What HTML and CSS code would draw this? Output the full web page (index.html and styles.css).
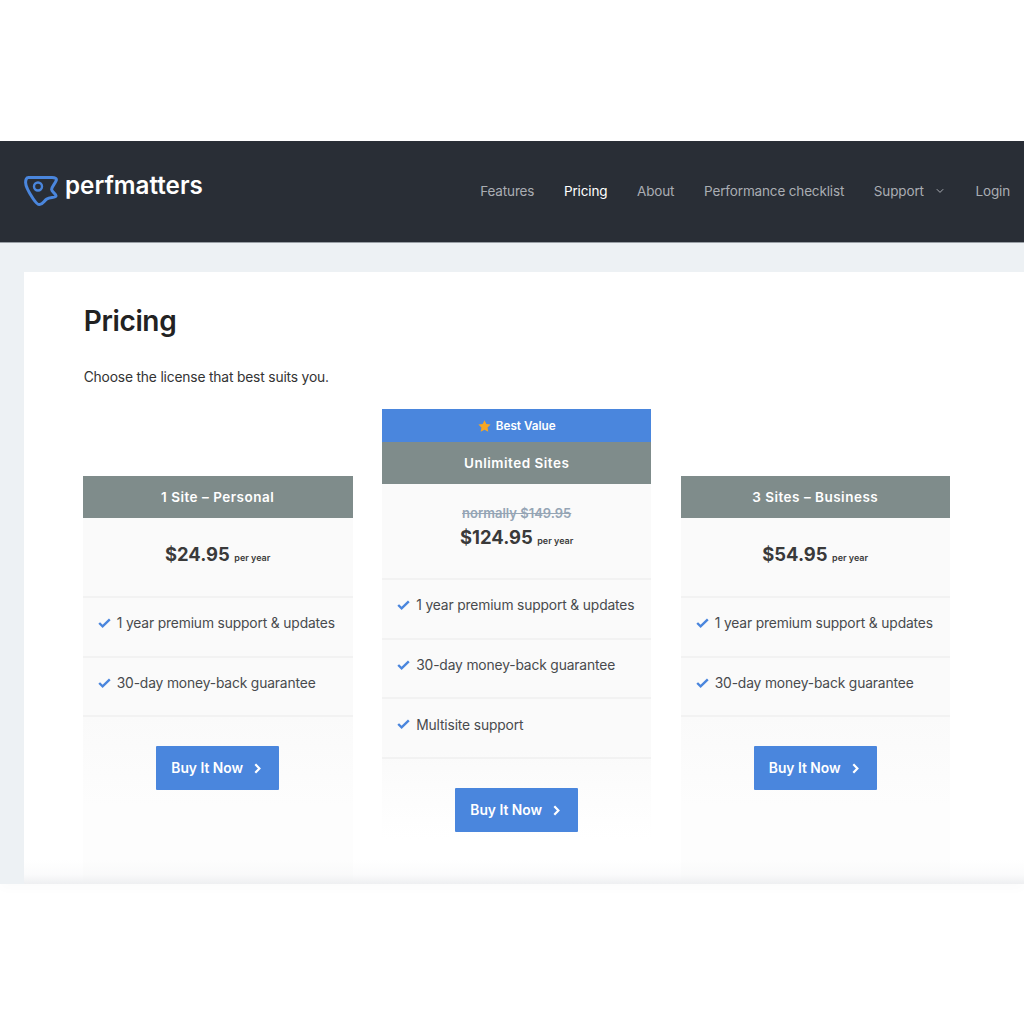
FILE: index.html
```html
<!DOCTYPE html>
<html lang="en">
<head>
<meta charset="utf-8">
<title>Pricing - perfmatters</title>
<link rel="stylesheet" href="styles.css">
</head>
<body>
<div class="shot">
  <header class="topbar">
    <a class="brand">
      <svg class="logo" width="34" height="32" viewBox="0 0 34 32" fill="none">
        <path d="M4.5 2.6H28C31 2.6 33 3.2 32.2 5.5C31.2 8.5 27.6 11.5 27.6 14.5C27.6 16.8 32.4 19 32 21C31.6 23 25.8 22 22.8 24C20 25.8 18.5 29.6 15.5 29.6C13 29.6 11 26.5 9 23.5C6 19 1.6 12 1.6 7.5C1.6 4.5 2.4 2.6 4.5 2.6Z" stroke="#4a86dd" stroke-width="3" stroke-linejoin="round"/>
        <circle cx="14" cy="11.5" r="4" stroke="#4a86dd" stroke-width="2.4"/>
      </svg>
      <span class="brand-name">perfmatters</span>
    </a>
    <nav class="nav">
      <a>Features</a>
      <a class="active">Pricing</a>
      <a>About</a>
      <a>Performance checklist</a>
      <a class="has-caret">Support
        <svg width="8" height="6" viewBox="0 0 8 6" fill="none"><path d="M.8 1.2 4 4.4l3.2-3.2" stroke="#a9adb3" stroke-width="1"/></svg>
      </a>
      <a>Login</a>
    </nav>
  </header>
  <main class="band">
    <section class="sheet">
      <h1>Pricing</h1>
      <p class="intro">Choose the license that best suits you.</p>
      <div class="plans">
        <article class="plan">
          <h2 class="plan-title">1 Site – Personal</h2>
          <div class="price"><strong>$24.95</strong> <small>per year</small></div>
          <ul class="features">
            <li><svg class="check" width="13" height="10" viewBox="0 0 13 10" fill="none"><path d="M1.2 5 4.6 8.3 11.8 1.3" stroke="#4a86dd" stroke-width="2.4"/></svg>1 year premium support &amp; updates</li>
            <li><svg class="check" width="13" height="10" viewBox="0 0 13 10" fill="none"><path d="M1.2 5 4.6 8.3 11.8 1.3" stroke="#4a86dd" stroke-width="2.4"/></svg>30-day money-back guarantee</li>
          </ul>
          <div class="cta"><a class="buy">Buy It Now<svg width="7" height="11" viewBox="0 0 7 11" fill="none"><path d="M1.3 1.3 5.4 5.5 1.3 9.7" stroke="#fff" stroke-width="2.2"/></svg></a></div>
        </article>
        <article class="plan featured">
          <div class="ribbon"><svg width="13" height="12" viewBox="0 0 14 13"><path d="M7 .3l2 4.1 4.6.6-3.3 3.2.8 4.5L7 10.6l-4.1 2.1.8-4.5L.4 5 5 4.4z" fill="#f5a623"/></svg>Best Value</div>
          <h2 class="plan-title">Unlimited Sites</h2>
          <div class="price tall"><s>normally $149.95</s><div><strong>$124.95</strong> <small>per year</small></div></div>
          <ul class="features">
            <li><svg class="check" width="13" height="10" viewBox="0 0 13 10" fill="none"><path d="M1.2 5 4.6 8.3 11.8 1.3" stroke="#4a86dd" stroke-width="2.4"/></svg>1 year premium support &amp; updates</li>
            <li><svg class="check" width="13" height="10" viewBox="0 0 13 10" fill="none"><path d="M1.2 5 4.6 8.3 11.8 1.3" stroke="#4a86dd" stroke-width="2.4"/></svg>30-day money-back guarantee</li>
            <li><svg class="check" width="13" height="10" viewBox="0 0 13 10" fill="none"><path d="M1.2 5 4.6 8.3 11.8 1.3" stroke="#4a86dd" stroke-width="2.4"/></svg>Multisite support</li>
          </ul>
          <div class="cta"><a class="buy">Buy It Now<svg width="7" height="11" viewBox="0 0 7 11" fill="none"><path d="M1.3 1.3 5.4 5.5 1.3 9.7" stroke="#fff" stroke-width="2.2"/></svg></a></div>
        </article>
        <article class="plan">
          <h2 class="plan-title">3 Sites – Business</h2>
          <div class="price"><strong>$54.95</strong> <small>per year</small></div>
          <ul class="features">
            <li><svg class="check" width="13" height="10" viewBox="0 0 13 10" fill="none"><path d="M1.2 5 4.6 8.3 11.8 1.3" stroke="#4a86dd" stroke-width="2.4"/></svg>1 year premium support &amp; updates</li>
            <li><svg class="check" width="13" height="10" viewBox="0 0 13 10" fill="none"><path d="M1.2 5 4.6 8.3 11.8 1.3" stroke="#4a86dd" stroke-width="2.4"/></svg>30-day money-back guarantee</li>
          </ul>
          <div class="cta"><a class="buy">Buy It Now<svg width="7" height="11" viewBox="0 0 7 11" fill="none"><path d="M1.3 1.3 5.4 5.5 1.3 9.7" stroke="#fff" stroke-width="2.2"/></svg></a></div>
        </article>
      </div>
    </section>
    <div class="fade"></div>
  </main>
</div>
</body>
</html>
```
FILE: styles.css
```css
* { box-sizing: border-box; }
html, body { margin: 0; background: #fff; }
body { font-family: Inter, "Liberation Sans", sans-serif; color: #2f3133; }
.shot { width: 1024px; height: 1024px; padding-top: 141px; overflow: hidden; }
.topbar {
  height: 102px; background: #292e36; border-bottom: 1px solid #9aa0a6;
  display: flex; justify-content: space-between; align-items: flex-start;
  padding: 0 14px 0 24px;
}
.brand { display: flex; align-items: flex-start; gap: 7px; margin-top: 30px; }
.logo { display: block; margin-top: 4px; }
.brand-name { font-size: 24.2px; font-weight: 600; color: #fff; line-height: 30px; }
.nav { display: flex; gap: 29.7px; margin-top: 41px; font-size: 13.5px; letter-spacing: -.15px; line-height: 18px; color: #a9adb3; }
.nav .active { color: #fff; }
.has-caret { display: flex; align-items: center; gap: 12px; padding-right: 2px; }
.band { position: relative; height: 641px; background: #edf1f4; padding: 29px 0 0 24px; overflow: hidden; box-shadow: 0 4px 12px rgba(0,0,0,.02); }
.sheet { height: 100%; background: #fff; padding: 31px 74px 0 58.7px; }
h1 { margin: 0 0 0 1px; font-size: 28px; line-height: 36px; font-weight: 600; color: #222; letter-spacing: -.35px; }
.intro { margin: 27px 0 0 1px; font-size: 13.8px; letter-spacing: -.17px; line-height: 22px; color: #333; }
.plans { display: grid; grid-template-columns: 270px 269px 269px; column-gap: 29.5px; margin-top: 21px; }
.plan { margin-top: 67px; background: linear-gradient(#fafafa 0, #fafafa 240px, #fdfdfd 330px); }
.plan.featured { margin-top: 0; background: linear-gradient(#fafafa 75px, #fafafa 340px, #fff 430px); }
.ribbon {
  height: 33px; background: #4a86dd; color: #fff; font-size: 11.7px; font-weight: 600;
  display: flex; align-items: center; justify-content: center; gap: 5px;
}
.plan-title {
  margin: 0; height: 42px; background: #7f8c8b; color: #fff; text-align: center;
  font-size: 13.5px; font-weight: 600; line-height: 42px; letter-spacing: .5px;
}
.price { height: 80px; padding-top: 24px; text-align: center; line-height: 24px; border-bottom: 2px solid #f2f2f2; color: #3a3a3a; }
.price.tall { height: 96px; padding-top: 20px; }
.price s { display: block; font-size: 13px; font-weight: 600; line-height: 18px; color: #95a5b5; }
.price.tall div { margin-top: 3px; }
.price strong { font-size: 18.4px; font-weight: 700; }
.price small { font-size: 9px; font-weight: 600; }
.features { list-style: none; margin: 0; padding: 0; }
.features li {
  height: 59.7px; display: flex; align-items: center; gap: 6px; padding: 0 0 7px 15px;
  font-size: 13.8px; letter-spacing: -.14px; color: #484a4d; border-bottom: 2px solid #f2f2f2; white-space: nowrap;
}
.check { flex: none; margin-top: -1px; }
.cta { display: flex; justify-content: center; padding: 29px 0 60px; }
.buy {
  width: 123px; height: 44px; padding-right: 3px; background: #4a86dd; border-radius: 1px; color: #fff;
  display: flex; align-items: center; justify-content: center; gap: 11px;
  font-size: 13.8px; font-weight: 600;
}
.fade { position: absolute; left: 24px; right: 0; bottom: 0; height: 24px; background: linear-gradient(rgba(238,239,241,0), rgba(238,239,241,.25) 60%, rgba(238,239,241,1)); }
```
